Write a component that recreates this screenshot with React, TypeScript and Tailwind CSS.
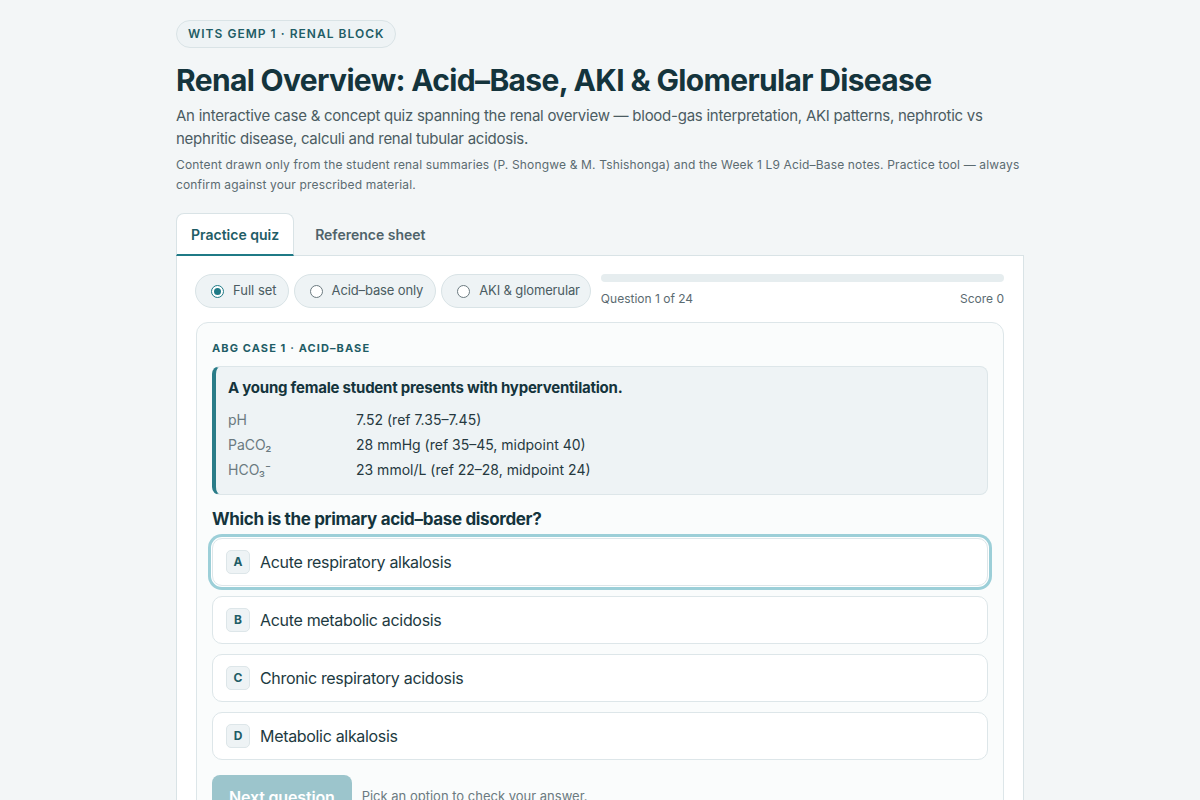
import React from "react";

const options = [
  { k: "A", t: "Acute respiratory alkalosis" },
  { k: "B", t: "Acute metabolic acidosis" },
  { k: "C", t: "Chronic respiratory acidosis" },
  { k: "D", t: "Metabolic alkalosis" },
];

export default function App() {
  return (
    <div className="min-h-screen bg-[#f3f6f7] text-[#14343c]" style={{ fontFamily: "Inter, 'Noto Sans', sans-serif" }}>
      <div className="mx-auto w-[848px] pt-5">
        <div className="inline-flex h-7 items-center rounded-full border border-[#d9e3e6] bg-[#eef3f5] px-[11px] text-[12px] font-semibold uppercase tracking-[0.085em] text-[#1f5d66]">
          Wits GEMP 1 · Renal Block
        </div>
        <h1 className="mt-[14px] text-[30px] font-bold leading-[36px] tracking-[-0.022em] text-[#14343c]">
          Renal Overview: Acid–Base, AKI &amp; Glomerular Disease
        </h1>
        <p className="mt-[6px] text-[15px] leading-[23px] tracking-[-0.017em] text-[#4b5c62]">
          An interactive case &amp; concept quiz spanning the renal overview — blood-gas interpretation, AKI patterns, nephrotic vs nephritic disease, calculi and renal tubular acidosis.
        </p>
        <p className="mt-[5px] text-[12px] leading-[20px] tracking-[0.013em] text-[#5b6b71]">
          Content drawn only from the student renal summaries (P. Shongwe &amp; M. Tshishonga) and the Week 1 L9 Acid–Base notes. Practice tool — always confirm against your prescribed material.
        </p>

        <div className="mt-[18px] flex items-end border-b border-[#d9e3e6]">
          <div className="-mb-px flex h-[43px] items-center rounded-t-lg border border-b-2 border-[#d9e3e6] border-b-[#1f7a86] bg-white px-[14px] text-[14px] font-semibold text-[#1f5d66]">
            Practice quiz
          </div>
          <div className="flex h-[42px] items-center px-[21px] text-[14px] font-semibold text-[#4f636a]">
            Reference sheet
          </div>
        </div>

        <div className="border border-t-0 border-[#d9e3e6] bg-white px-[19px] pt-[18px] pb-10">
          <div className="-ml-px flex items-start gap-[5px]">
            <div className="flex h-[34px] items-center gap-[9px] rounded-full border border-[#d9e3e6] bg-[#eef3f5] pl-[15px] pr-[11px] text-[13px] text-[#4b5c62]">
              <span className="flex h-[13px] w-[13px] items-center justify-center rounded-full border border-[#1f7a86] bg-white">
                <span className="h-[7px] w-[7px] rounded-full bg-[#1f7a86]" />
              </span>
              Full set
            </div>
            <div className="flex h-[34px] items-center gap-[9px] rounded-full border border-[#d9e3e6] bg-[#eef3f5] pl-[15px] pr-[12px] text-[13px] tracking-[-0.01em] text-[#4b5c62]">
              <span className="h-[13px] w-[13px] rounded-full border border-[#6b7a80] bg-white" />
              Acid–base only
            </div>
            <div className="flex h-[34px] items-center gap-[9px] rounded-full border border-[#d9e3e6] bg-[#eef3f5] pl-[15px] pr-[10px] text-[13px] tracking-[-0.01em] text-[#4b5c62]">
              <span className="h-[13px] w-[13px] rounded-full border border-[#6b7a80] bg-white" />
              AKI &amp; glomerular
            </div>
            <div className="ml-[5px] flex-1">
              <div className="h-2 rounded-full bg-[#e6edef]" />
              <div className="mt-[8px] flex justify-between text-[12px] text-[#5b6b71]">
                <span>Question 1 of 24</span>
                <span>Score 0</span>
              </div>
            </div>
          </div>

          <div className="mt-[14px] rounded-xl border border-[#dde6e9] bg-[#fafcfc] px-[15px] pt-[17px] pb-6">
            <div className="text-[11px] font-bold uppercase tracking-[0.1em] text-[#1f5d66]">
              ABG Case 1 · Acid–Base
            </div>
            <div className="mt-[9px] rounded-lg border border-[#dde6e9] border-l-4 border-l-[#2a7c88] bg-[#eef3f5] pl-[12px] pr-4 pt-[11px] pb-[12px]">
              <div className="text-[15px] font-bold leading-[20px] tracking-[-0.015em] text-[#14343c]">
                A young female student presents with hyperventilation.
              </div>
              <div className="mt-[9px] grid grid-cols-[128px_1fr] text-[14px] leading-[25px]">
                <span className="text-[#6b7a80]">pH</span>
                <span className="text-[#26393f]">7.52 (ref 7.35–7.45)</span>
                <span className="text-[#6b7a80]">PaCO₂</span>
                <span className="text-[#26393f]">28 mmHg (ref 35–45, midpoint 40)</span>
                <span className="text-[#6b7a80]">HCO₃⁻</span>
                <span className="text-[#26393f]">23 mmol/L (ref 22–28, midpoint 24)</span>
              </div>
            </div>
            <div className="mt-[13px] text-[17px] font-bold leading-[22px] tracking-[-0.02em] text-[#14343c]">
              Which is the primary acid–base disorder?
            </div>
            <div className="mt-[8px] flex flex-col gap-[10px]">
              {options.map((o, i) => (
                <div
                  key={o.k}
                  className={
                    i === 0
                      ? "flex h-[48px] items-center gap-[10px] rounded-[10px] border border-[#dde6e9] bg-white px-[13px] text-[16px] tracking-[-0.02em] text-[#1d3a41] ring-[3px] ring-[#9ccfd8] ring-offset-1"
                      : "flex h-[48px] items-center gap-[10px] rounded-[10px] border border-[#dde6e9] bg-white px-[13px] text-[16px] tracking-[-0.02em] text-[#1d3a41]"
                  }
                >
                  <span className="flex h-6 w-6 items-center justify-center rounded-[5px] border border-[#dde6e9] bg-[#eef3f5] text-[12px] font-bold tracking-normal text-[#1f5d66]">
                    {o.k}
                  </span>
                  {o.t}
                </div>
              ))}
            </div>
            <div className="mt-[15px] flex items-center gap-[10px]">
              <div className="flex h-[44px] items-center rounded-lg bg-[#9cc5cc] px-[17px] text-[16px] font-semibold tracking-[-0.01em] text-white">
                Next question
              </div>
              <span className="text-[13px] text-[#6b7a80]">Pick an option to check your answer.</span>
            </div>
          </div>
        </div>
      </div>
    </div>
  );
}
